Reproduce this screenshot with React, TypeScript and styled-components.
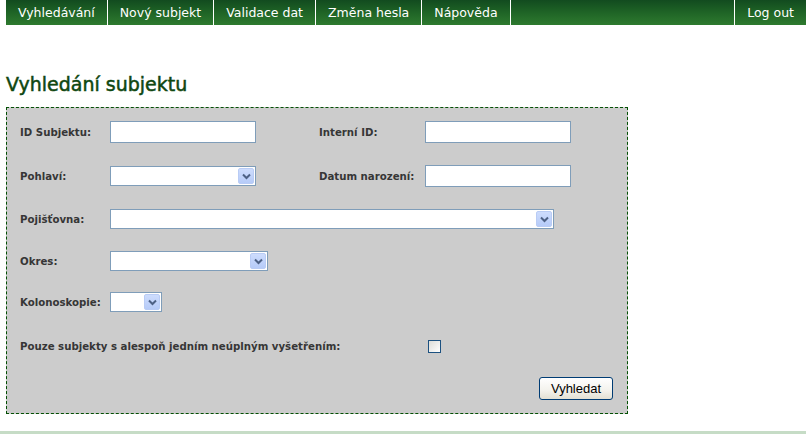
import styled, { createGlobalStyle } from "styled-components";

const GlobalStyle = createGlobalStyle`
  html, body {
    margin: 0;
    padding: 0;
    background: #ffffff;
  }
`;

const Page = styled.div`
  width: 806px;
  height: 434px;
  position: relative;
  overflow: hidden;
  font-family: "DejaVu Sans", Verdana, sans-serif;
`;

const Menu = styled.ul`
  display: flex;
  list-style: none;
  margin: 0 0 0 6px;
  padding: 0;
  height: 25px;
  background: linear-gradient(to bottom, #124b1f 0%, #1f6426 50%, #2e7a2f 100%);
`;

const MenuItem = styled.li<{ $right?: boolean }>`
  display: flex;
  align-items: center;
  padding: 0 12px;
  color: #ffffff;
  font-size: 12.5px;
  border-right: ${({ $right }) => ($right ? "none" : "1px solid #ffffff")};
  border-left: ${({ $right }) => ($right ? "1px solid #ffffff" : "none")};
  margin-left: ${({ $right }) => ($right ? "auto" : "0")};
`;

const Content = styled.div`
  padding: 46px 0 0 6px;
`;

const Heading = styled.h1`
  margin: 0 0 10px 0;
  font-size: 19px;
  font-weight: normal;
  color: #0f4710;
  -webkit-text-stroke: 0.5px #0f4710;
  line-height: 26px;
`;

const FormBox = styled.div`
  width: 622px;
  height: 307px;
  box-sizing: border-box;
  background: #cccccc;
  border: 1px dashed #045004;
  padding: 13px 0 0 13px;
  display: flex;
  flex-direction: column;
`;

const Row = styled.div<{ $gap: number }>`
  display: flex;
  align-items: center;
  height: 22px;
  margin-top: ${({ $gap }) => $gap}px;
`;

const Label = styled.label<{ $width: number }>`
  width: ${({ $width }) => $width}px;
  flex-shrink: 0;
  font-size: 10.2px;
  font-weight: bold;
  color: #363636;
`;

const TextInput = styled.input`
  width: 146px;
  height: 22px;
  box-sizing: border-box;
  border: 1px solid #7f9db9;
  background: #ffffff;
  margin: 0;
  padding: 0 2px;
`;

const Gap = styled.div<{ $width: number }>`
  width: ${({ $width }) => $width}px;
  flex-shrink: 0;
`;

const SelectBox = styled.div<{ $width: number }>`
  width: ${({ $width }) => $width}px;
  height: 20px;
  box-sizing: border-box;
  border: 1px solid #7f9db9;
  background: #ffffff;
  display: flex;
  padding: 1px;
`;

const SelectField = styled.select`
  flex: 1;
  min-width: 0;
  border: none;
  background: transparent;
  appearance: none;
  -webkit-appearance: none;
  outline: none;
  margin: 0;
  padding: 0;
`;

const Arrow = styled.div`
  width: 16px;
  flex-shrink: 0;
  border-radius: 2px;
  background: linear-gradient(to bottom, #cddcfd 0%, #b6cbf8 100%);
  border: 1px solid #b9ccf5;
  box-sizing: border-box;
  display: flex;
  align-items: center;
  justify-content: center;
`;

const Check = styled.input`
  appearance: none;
  -webkit-appearance: none;
  width: 13px;
  height: 13px;
  margin: 0;
  box-sizing: border-box;
  border: 1px solid #1c5180;
  background: linear-gradient(135deg, #dcdcd7 0%, #ffffff 100%);
`;

const ButtonRow = styled.div`
  display: flex;
  justify-content: flex-end;
  padding: 20px 14px 0 0;
`;

const Button = styled.button`
  height: 23px;
  width: 74px;
  padding: 0;
  border: 1px solid #003c74;
  border-radius: 3px;
  background: linear-gradient(to bottom, #ffffff 0%, #f3f2ec 60%, #e3e0d3 100%);
  font-family: "Liberation Sans", Arial, sans-serif;
  font-size: 13px;
  color: #000000;
`;

const Footer = styled.div`
  position: absolute;
  left: 0;
  right: 0;
  bottom: 0;
  height: 3px;
  background: #c6dcc6;
`;

function Select({ width }: { width: number }) {
  return (
    <SelectBox $width={width}>
      <SelectField>
        <option></option>
      </SelectField>
      <Arrow>
        <svg width="9" height="7" viewBox="0 0 9 7">
          <path d="M1 1.5 L4.5 5 L8 1.5" fill="none" stroke="#4d6185" strokeWidth="2" />
        </svg>
      </Arrow>
    </SelectBox>
  );
}

const menu = ["Vyhledávání", "Nový subjekt", "Validace dat", "Změna hesla", "Nápověda"];

export default function App() {
  return (
    <Page>
      <GlobalStyle />
      <Menu>
        {menu.map((m) => (
          <MenuItem key={m}>{m}</MenuItem>
        ))}
        <MenuItem $right>Log out</MenuItem>
      </Menu>
      <Content>
        <Heading>Vyhledání subjektu</Heading>
        <FormBox>
          <Row $gap={0}>
            <Label $width={90}>ID Subjektu:</Label>
            <TextInput />
            <Gap $width={63} />
            <Label $width={106}>Interní ID:</Label>
            <TextInput />
          </Row>
          <Row $gap={22}>
            <Label $width={90}>Pohlaví:</Label>
            <Select width={146} />
            <Gap $width={63} />
            <Label $width={106}>Datum narození:</Label>
            <TextInput />
          </Row>
          <Row $gap={21}>
            <Label $width={90}>Pojišťovna:</Label>
            <Select width={444} />
          </Row>
          <Row $gap={20}>
            <Label $width={90}>Okres:</Label>
            <Select width={158} />
          </Row>
          <Row $gap={19}>
            <Label $width={90}>Kolonoskopie:</Label>
            <Select width={52} />
          </Row>
          <Row $gap={22}>
            <Label $width={408}>Pouze subjekty s alespoň jedním neúplným vyšetřením:</Label>
            <Check type="checkbox" />
          </Row>
          <ButtonRow>
            <Button>Vyhledat</Button>
          </ButtonRow>
        </FormBox>
      </Content>
      <Footer />
    </Page>
  );
}
